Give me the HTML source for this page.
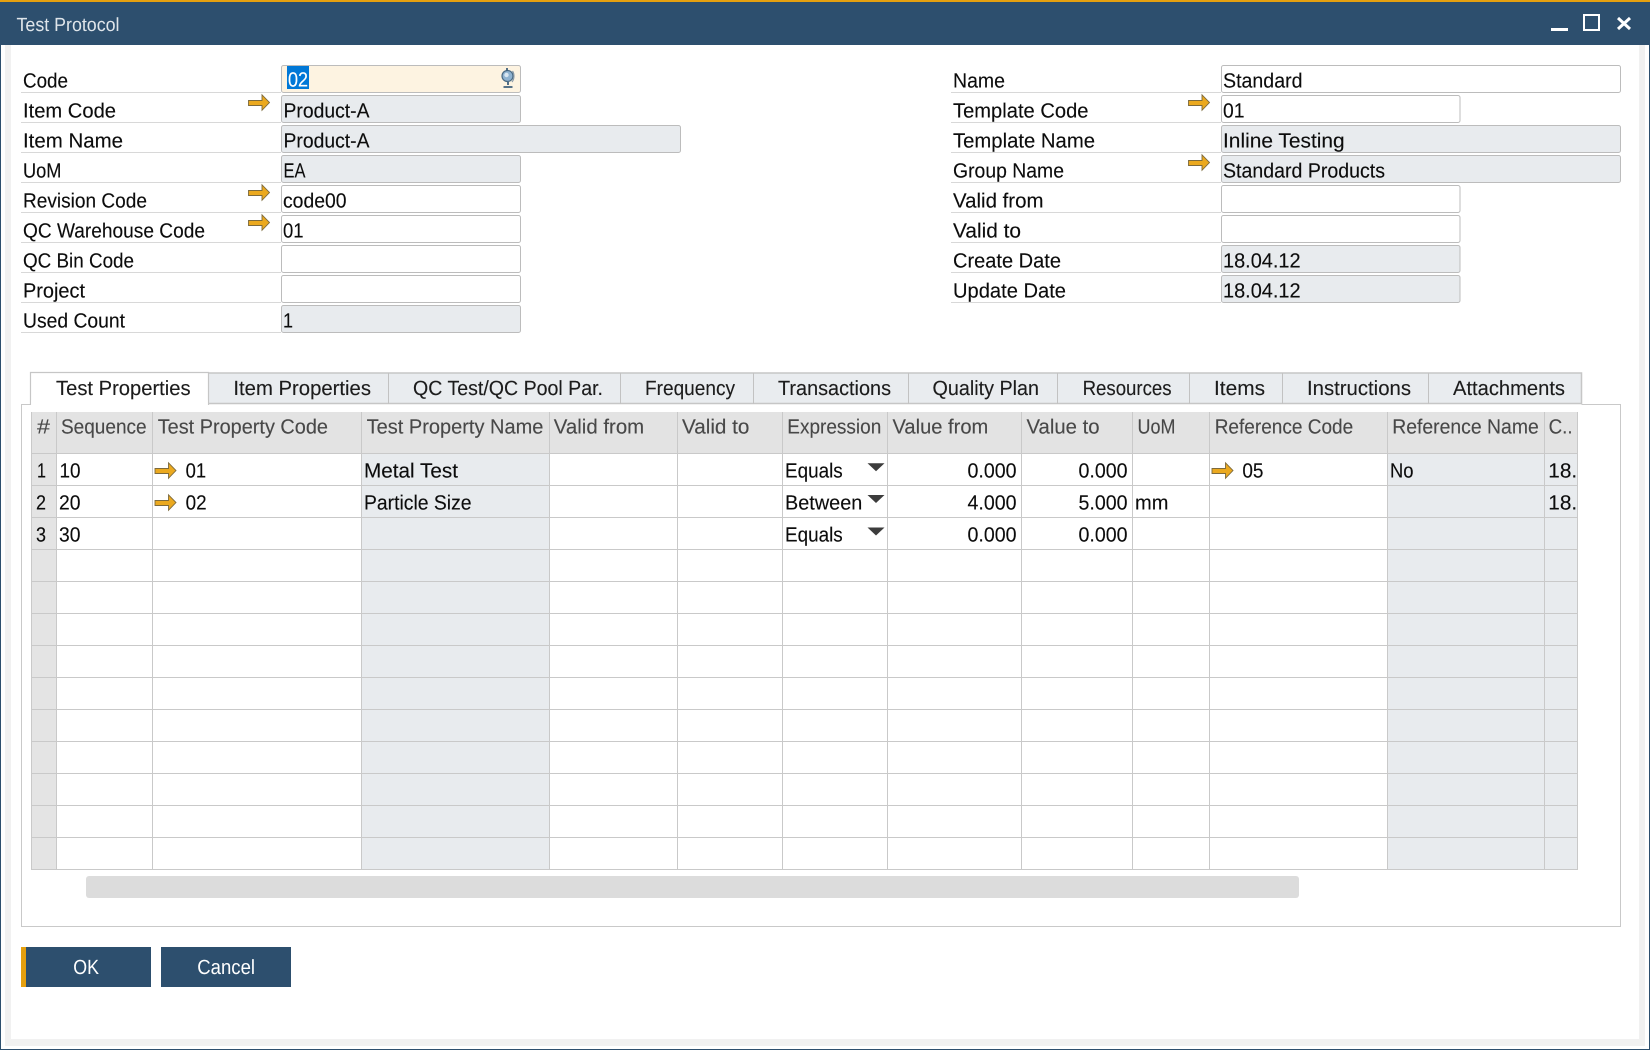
<!DOCTYPE html>
<html lang="en"><head><meta charset="utf-8"><title>Test Protocol</title>
<style>
html,body{margin:0;padding:0;background:#fff;width:1650px;height:1050px;overflow:hidden}
svg{display:block}
text{font-family:"Liberation Sans",sans-serif;font-size:20.5px;fill:#0c0c0c;text-rendering:geometricPrecision;transform:translateY(-.6px);stroke:#0c0c0c;stroke-width:.12px}
.h text{fill:#484848;stroke:#484848}
.t text{fill:#1c1c1c;stroke:#1c1c1c}
.l line{stroke:#d8d8d8;stroke-width:1}
.f{stroke:#bcbcbc;stroke-width:1;fill:#fff}
.d{stroke:#bcbcbc;stroke-width:1;fill:#e8ebee}
.w{fill:#fff;stroke:#fff}
</style></head><body>
<svg width="1650" height="1050" viewBox="0 0 1650 1050" xmlns="http://www.w3.org/2000/svg">
<defs>
<g id="a"><path d="M.5 6.5H14V.8L21.5 8.5 14 16.3V11.5H.5Z" fill="#eba91f" stroke="#7d6a3c" stroke-width=".9"/></g>
<g id="v"><path d="M0 0H17L8.5 8Z" fill="#3c3c3c"/></g>
<clipPath id="c"><rect x="1545" y="455" width="32" height="60"/></clipPath>
</defs>
<rect width="1650" height="1050" fill="#fff"/>
<!-- window frame -->
<rect x="5" y="45" width="6" height="1001" fill="#f1f1f1"/>
<rect x="1639" y="45" width="6" height="1001" fill="#f1f1f1"/>
<rect x="5" y="1039" width="1640" height="7" fill="#f1f1f1"/>
<rect x="0" y="0" width="1" height="1050" fill="#2d4f6e"/>
<rect x="1649" y="0" width="1" height="1050" fill="#2d4f6e"/>
<rect x="0" y="1049" width="1650" height="1" fill="#2d4f6e"/>
<rect x="11" y="45" width="1628" height="994" fill="#fff"/>
<!-- title bar -->
<rect x="0" y="0" width="1650" height="45" fill="#2d4f6e"/>
<rect x="0" y="0" width="1650" height="2" fill="#e5a00f"/>
<text x="16.5" y="31.5" style="font-size:19px;fill:#dfe5ea;stroke:none" textLength="103" lengthAdjust="spacingAndGlyphs">Test Protocol</text>
<rect x="1551" y="28" width="17" height="3" fill="#fff"/>
<rect x="1584" y="15" width="15" height="15" fill="none" stroke="#fff" stroke-width="2"/>
<path d="M1618 18L1630 29M1630 18L1618 29" stroke="#fff" stroke-width="3" fill="none"/>

<!-- left form -->
<g class="l">
<line x1="21" x2="281" y1="92.5" y2="92.5"/><line x1="21" x2="281" y1="122.5" y2="122.5"/><line x1="21" x2="281" y1="152.5" y2="152.5"/>
<line x1="21" x2="281" y1="182.5" y2="182.5"/><line x1="21" x2="281" y1="212.5" y2="212.5"/><line x1="21" x2="281" y1="242.5" y2="242.5"/>
<line x1="21" x2="281" y1="272.5" y2="272.5"/><line x1="21" x2="281" y1="302.5" y2="302.5"/><line x1="21" x2="281" y1="332.5" y2="332.5"/>
<line x1="951" x2="1221" y1="92.5" y2="92.5"/><line x1="951" x2="1221" y1="122.5" y2="122.5"/><line x1="951" x2="1221" y1="152.5" y2="152.5"/>
<line x1="951" x2="1221" y1="182.5" y2="182.5"/><line x1="951" x2="1221" y1="212.5" y2="212.5"/><line x1="951" x2="1221" y1="242.5" y2="242.5"/>
<line x1="951" x2="1221" y1="272.5" y2="272.5"/><line x1="951" x2="1221" y1="302.5" y2="302.5"/>
</g>
<rect x="281.5" y="65.5" width="239" height="27" rx="2" stroke="#bcbcbc" fill="#fdf3e1"/>
<rect class="d" x="281.5" y="95.5" width="239" height="27" rx="2"/>
<rect class="d" x="281.5" y="125.5" width="399" height="27" rx="2"/>
<rect class="d" x="281.5" y="155.5" width="239" height="27" rx="2"/>
<rect class="f" x="281.5" y="185.5" width="239" height="27" rx="2"/>
<rect class="f" x="281.5" y="215.5" width="239" height="27" rx="2"/>
<rect class="f" x="281.5" y="245.5" width="239" height="27" rx="2"/>
<rect class="f" x="281.5" y="275.5" width="239" height="27" rx="2"/>
<rect class="d" x="281.5" y="305.5" width="239" height="27" rx="2"/>

<text x="23" y="88" textLength="45" lengthAdjust="spacingAndGlyphs">Code</text>
<text x="23" y="118" textLength="93" lengthAdjust="spacingAndGlyphs">Item Code</text>
<text x="23" y="148" textLength="100" lengthAdjust="spacingAndGlyphs">Item Name</text>
<text x="23" y="178" textLength="38.5" lengthAdjust="spacingAndGlyphs">UoM</text>
<text x="23" y="208" textLength="124" lengthAdjust="spacingAndGlyphs">Revision Code</text>
<text x="23" y="238" textLength="182" lengthAdjust="spacingAndGlyphs">QC Warehouse Code</text>
<text x="23" y="268" textLength="111" lengthAdjust="spacingAndGlyphs">QC Bin Code</text>
<text x="23" y="298" textLength="62" lengthAdjust="spacingAndGlyphs">Project</text>
<text x="23" y="328" textLength="102" lengthAdjust="spacingAndGlyphs">Used Count</text>

<rect x="287" y="66" width="22" height="23" fill="#0078d7"/>
<text class="w" x="288" y="87" style="fill:#fff;stroke:#fff" textLength="20" lengthAdjust="spacingAndGlyphs">02</text>
<text x="283.5" y="118" textLength="86" lengthAdjust="spacingAndGlyphs">Product-A</text>
<text x="283.5" y="148" textLength="86" lengthAdjust="spacingAndGlyphs">Product-A</text>
<text x="283.5" y="178" textLength="22" lengthAdjust="spacingAndGlyphs">EA</text>
<text x="283" y="208" textLength="63.5" lengthAdjust="spacingAndGlyphs">code00</text>
<text x="283" y="238" textLength="20.5" lengthAdjust="spacingAndGlyphs">01</text>
<text x="283" y="328" textLength="10" lengthAdjust="spacingAndGlyphs">1</text>

<!-- globe icon -->
<g>
<circle cx="507.5" cy="76" r="5.5" fill="#8fb2d0" stroke="#4a6a84" stroke-width="1.2"/>
<circle cx="506.5" cy="75" r="2.2" fill="#d9e7f2"/>
<path d="M507 68V71M508 82V85M503.5 87H512.5" stroke="#3f607c" stroke-width="1.8" fill="none"/>
<path d="M512.5 71C514.5 74 514.5 79 512 82" fill="none" stroke="#8a9aa8" stroke-width="1.2"/>
</g>
<use href="#a" x="248" y="94"/>
<use href="#a" x="248" y="184"/>
<use href="#a" x="248" y="214"/>

<!-- right form -->
<rect class="f" x="1221.5" y="65.5" width="399" height="27" rx="2"/>
<rect class="f" x="1221.5" y="95.5" width="238.5" height="27" rx="2"/>
<rect class="d" x="1221.5" y="125.5" width="399" height="27" rx="2"/>
<rect class="d" x="1221.5" y="155.5" width="399" height="27" rx="2"/>
<rect class="f" x="1221.5" y="185.5" width="238.5" height="27" rx="2"/>
<rect class="f" x="1221.5" y="215.5" width="238.5" height="27" rx="2"/>
<rect class="d" x="1221.5" y="245.5" width="238.5" height="27" rx="2"/>
<rect class="d" x="1221.5" y="275.5" width="238.5" height="27" rx="2"/>

<text x="953" y="88" textLength="52" lengthAdjust="spacingAndGlyphs">Name</text>
<text x="953" y="118" textLength="135.5" lengthAdjust="spacingAndGlyphs">Template Code</text>
<text x="953" y="148" textLength="142" lengthAdjust="spacingAndGlyphs">Template Name</text>
<text x="953" y="178" textLength="111" lengthAdjust="spacingAndGlyphs">Group Name</text>
<text x="953" y="208" textLength="90.5" lengthAdjust="spacingAndGlyphs">Valid from</text>
<text x="953" y="238" textLength="68" lengthAdjust="spacingAndGlyphs">Valid to</text>
<text x="953" y="268" textLength="108" lengthAdjust="spacingAndGlyphs">Create Date</text>
<text x="953" y="298" textLength="113" lengthAdjust="spacingAndGlyphs">Update Date</text>

<text x="1223" y="88" textLength="79.5" lengthAdjust="spacingAndGlyphs">Standard</text>
<text x="1223" y="118" textLength="21.5" lengthAdjust="spacingAndGlyphs">01</text>
<text x="1223" y="148" textLength="121.7" lengthAdjust="spacingAndGlyphs">Inline Testing</text>
<text x="1223" y="178" textLength="162" lengthAdjust="spacingAndGlyphs">Standard Products</text>
<text x="1223" y="268" textLength="77.6" lengthAdjust="spacingAndGlyphs">18.04.12</text>
<text x="1223" y="298" textLength="77.6" lengthAdjust="spacingAndGlyphs">18.04.12</text>
<use href="#a" x="1188" y="94"/>
<use href="#a" x="1188" y="154"/>

<!-- tab panel -->
<path d="M30.5 404.5H21.5V926.5H1620.5V404.5H1581.5" fill="none" stroke="#c9c9c9"/>
<rect x="208.5" y="373" width="1373" height="31" fill="#e9ecef"/>
<path d="M208.5 373H1581.5V404M208.5 403.5H1581.5" fill="none" stroke="#c6c6c6" stroke-width="1.5"/>
<path d="M388.5 373V404M620.5 373V404M753.5 373V404M908.5 373V404M1057.5 373V404M1189.5 373V404M1282.5 373V404M1428.5 373V404" stroke="#c2c2c2" fill="none"/>
<path d="M30.5 405V372.5H208.5V405" fill="#fff" stroke="#c6c6c6" stroke-width="1.2"/>
<rect x="31.2" y="400" width="176.6" height="6" fill="#fff"/>
<g class="t">
<text x="56" y="395.5" textLength="134.6" lengthAdjust="spacingAndGlyphs">Test Properties</text>
<text x="233.4" y="395.5" textLength="137.6" lengthAdjust="spacingAndGlyphs">Item Properties</text>
<text x="413" y="395.5" textLength="190" lengthAdjust="spacingAndGlyphs">QC Test/QC Pool Par.</text>
<text x="645" y="395.5" textLength="90" lengthAdjust="spacingAndGlyphs">Frequency</text>
<text x="778" y="395.5" textLength="113" lengthAdjust="spacingAndGlyphs">Transactions</text>
<text x="932.5" y="395.5" textLength="106.5" lengthAdjust="spacingAndGlyphs">Quality Plan</text>
<text x="1082.6" y="395.5" textLength="89" lengthAdjust="spacingAndGlyphs">Resources</text>
<text x="1214" y="395.5" textLength="51" lengthAdjust="spacingAndGlyphs">Items</text>
<text x="1307" y="395.5" textLength="104" lengthAdjust="spacingAndGlyphs">Instructions</text>
<text x="1453" y="395.5" textLength="112" lengthAdjust="spacingAndGlyphs">Attachments</text>
</g>

<!-- grid -->
<rect x="31.5" y="412" width="1546" height="41" fill="#e3e3e3"/>
<rect x="31.5" y="453" width="25" height="416" fill="#e4e4e4"/>
<rect x="361.5" y="453" width="188" height="416" fill="#e8ebee"/>
<rect x="1387.5" y="453" width="190" height="416" fill="#e8ebee"/>
<path d="M31.5 412V869.5M56.5 412V869.5M152.5 412V869.5M361.5 412V869.5M549.5 412V869.5M677.5 412V869.5M782.5 412V869.5M887.5 412V869.5M1021.5 412V869.5M1132.5 412V869.5M1209.5 412V869.5M1387.5 412V869.5M1544.5 412V869.5M1577.5 412V869.5" stroke="#c9c9c9" fill="none"/>
<path d="M31 453.5H1578M31 485.5H1578M31 517.5H1578M31 549.5H1578M31 581.5H1578M31 613.5H1578M31 645.5H1578M31 677.5H1578M31 709.5H1578M31 741.5H1578M31 773.5H1578M31 805.5H1578M31 837.5H1578M31 869.5H1578" stroke="#c9c9c9" fill="none"/>
<g class="h">
<text x="37" y="434" textLength="13" lengthAdjust="spacingAndGlyphs">#</text>
<text x="61" y="434" textLength="85.6" lengthAdjust="spacingAndGlyphs">Sequence</text>
<text x="157.7" y="434" textLength="170.3" lengthAdjust="spacingAndGlyphs">Test Property Code</text>
<text x="366.6" y="434" textLength="176.8" lengthAdjust="spacingAndGlyphs">Test Property Name</text>
<text x="553.8" y="434" textLength="90.4" lengthAdjust="spacingAndGlyphs">Valid from</text>
<text x="682" y="434" textLength="67.4" lengthAdjust="spacingAndGlyphs">Valid to</text>
<text x="787.3" y="434" textLength="94" lengthAdjust="spacingAndGlyphs">Expression</text>
<text x="892.5" y="434" textLength="95.8" lengthAdjust="spacingAndGlyphs">Value from</text>
<text x="1026.5" y="434" textLength="73" lengthAdjust="spacingAndGlyphs">Value to</text>
<text x="1137.5" y="434" textLength="37.9" lengthAdjust="spacingAndGlyphs">UoM</text>
<text x="1214.7" y="434" textLength="138.5" lengthAdjust="spacingAndGlyphs">Reference Code</text>
<text x="1392.2" y="434" textLength="146.6" lengthAdjust="spacingAndGlyphs">Reference Name</text>
<text x="1548.6" y="434" textLength="24" lengthAdjust="spacingAndGlyphs">C..</text>
</g>

<g>
<text x="37" y="478" textLength="9" lengthAdjust="spacingAndGlyphs">1</text>
<text x="36" y="510" textLength="10" lengthAdjust="spacingAndGlyphs">2</text>
<text x="36" y="542" textLength="10" lengthAdjust="spacingAndGlyphs">3</text>
<text x="59.5" y="478" textLength="21" lengthAdjust="spacingAndGlyphs">10</text>
<text x="59" y="510" textLength="21.5" lengthAdjust="spacingAndGlyphs">20</text>
<text x="59" y="542" textLength="21.5" lengthAdjust="spacingAndGlyphs">30</text>
<use href="#a" x="154.5" y="462"/>
<use href="#a" x="154.5" y="494"/>
<text x="185.6" y="478" textLength="20.5" lengthAdjust="spacingAndGlyphs">01</text>
<text x="185.6" y="510" textLength="21" lengthAdjust="spacingAndGlyphs">02</text>
<text x="364" y="478" textLength="94" lengthAdjust="spacingAndGlyphs">Metal Test</text>
<text x="364" y="510" textLength="107.5" lengthAdjust="spacingAndGlyphs">Particle Size</text>
<text x="785" y="478" textLength="57.7" lengthAdjust="spacingAndGlyphs">Equals</text>
<text x="785" y="510" textLength="77.3" lengthAdjust="spacingAndGlyphs">Between</text>
<text x="785" y="542" textLength="57.7" lengthAdjust="spacingAndGlyphs">Equals</text>
<use href="#v" x="867.5" y="463.3"/>
<use href="#v" x="867.5" y="495"/>
<use href="#v" x="867.5" y="527.5"/>
<text x="967.5" y="478" textLength="49" lengthAdjust="spacingAndGlyphs">0.000</text>
<text x="967.5" y="510" textLength="49" lengthAdjust="spacingAndGlyphs">4.000</text>
<text x="967.5" y="542" textLength="49" lengthAdjust="spacingAndGlyphs">0.000</text>
<text x="1078.5" y="478" textLength="49" lengthAdjust="spacingAndGlyphs">0.000</text>
<text x="1078.5" y="510" textLength="49" lengthAdjust="spacingAndGlyphs">5.000</text>
<text x="1078.5" y="542" textLength="49" lengthAdjust="spacingAndGlyphs">0.000</text>
<text x="1135" y="510" textLength="33.4" lengthAdjust="spacingAndGlyphs">mm</text>
<use href="#a" x="1211.5" y="462"/>
<text x="1242.4" y="478" textLength="21.1" lengthAdjust="spacingAndGlyphs">05</text>
<text x="1390" y="478" textLength="23.5" lengthAdjust="spacingAndGlyphs">No</text>
<g clip-path="url(#c)">
<text x="1548.3" y="478" textLength="52" lengthAdjust="spacingAndGlyphs">18.04</text>
<text x="1548.3" y="510" textLength="52" lengthAdjust="spacingAndGlyphs">18.04</text>
</g>
</g>

<!-- horizontal scrollbar -->
<rect x="86" y="876" width="1213" height="22" rx="3" fill="#dcdcdc"/>

<!-- buttons -->
<rect x="21" y="947" width="130" height="40" fill="#2d4f6e"/>
<rect x="21" y="947" width="5" height="40" fill="#e5a00f"/>
<rect x="161" y="947" width="130" height="40" fill="#2d4f6e"/>
<text x="73.3" y="974.5" style="fill:#fff;stroke:none" textLength="25.7" lengthAdjust="spacingAndGlyphs">OK</text>
<text x="197.3" y="974.5" style="fill:#fff;stroke:none" textLength="57.7" lengthAdjust="spacingAndGlyphs">Cancel</text>
</svg>
</body></html>
